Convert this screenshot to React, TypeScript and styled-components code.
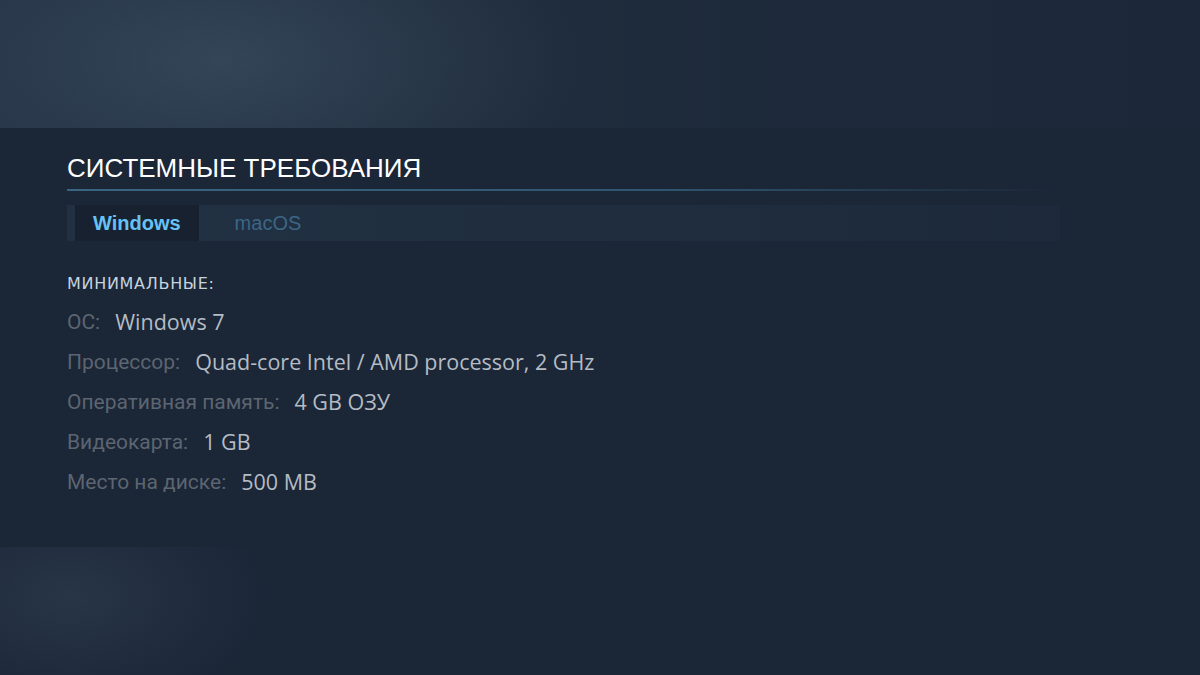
import React from "react";
import styled, { createGlobalStyle } from "styled-components";

const Global = createGlobalStyle`
  html, body { margin: 0; padding: 0; background: #1b2637; }
  body { width: 1200px; height: 675px; overflow: hidden; }
`;

const Page = styled.div`
  width: 1200px;
  height: 675px;
  display: flex;
  flex-direction: column;
  background: #1b2637;
`;

const TopBand = styled.div`
  height: 128px;
  flex: none;
  background:
    radial-gradient(ellipse 360px 170px at 220px 60px, rgba(70, 92, 112, 0.48), rgba(70, 92, 112, 0) 100%),
    linear-gradient(90deg, #243244 0%, #1e2b3b 55%, #1c2839 100%);
`;

const Section = styled.section`
  flex: none;
  width: 993px;
  padding: 24px 0 0 67px;
  display: flex;
  flex-direction: column;
`;

const Heading = styled.h2`
  margin: 0;
  font-family: "Liberation Sans", Arial, sans-serif;
  font-weight: 400;
  font-size: 26px;
  line-height: 32px;
  color: #ffffff;
`;

const Rule = styled.div`
  height: 2px;
  margin-top: 5px;
  background: linear-gradient(90deg, #3a6580 0%, #2f5670 60%, rgba(47, 86, 112, 0) 100%);
`;

const TabBar = styled.div`
  margin-top: 14px;
  height: 36px;
  display: flex;
  padding-left: 8px;
  background: linear-gradient(90deg, #213143 0%, #1f2d3e 60%, rgba(31, 45, 62, 0.5) 100%);
`;

const Tab = styled.div<{ $active?: boolean }>`
  display: flex;
  align-items: center;
  padding: 0 18px;
  font-family: "Liberation Sans", Arial, sans-serif;
  font-size: 20px;
  font-weight: ${(p) => (p.$active ? 700 : 400)};
  color: ${(p) => (p.$active ? "#67c1f5" : "#3c6685")};
  background: ${(p) => (p.$active ? "#172130" : "transparent")};
  margin-right: ${(p) => (p.$active ? "18px" : "0")};
`;

const Reqs = styled.div`
  margin-top: 33px;
  display: flex;
  flex-direction: column;
`;

const ReqTitle = styled.div`
  font-family: "DejaVu Sans", Verdana, sans-serif;
  font-size: 16px;
  line-height: 20px;
  letter-spacing: 0.7px;
  color: #c6d4df;
  text-transform: uppercase;
  margin-bottom: 8px;
`;

const Row = styled.div`
  display: flex;
  align-items: center;
  gap: 15px;
  height: 40px;
  line-height: 24px;
`;

const Label = styled.span`
  font-family: Roboto, "Noto Sans", sans-serif;
  font-size: 21px;
  color: #5c6570;
`;

const Value = styled.span`
  font-family: "Open Sans", "Noto Sans", sans-serif;
  font-size: 21.5px;
  color: #b4bcc4;
`;

const BottomBand = styled.div`
  flex: 1;
  margin-top: 45px;
  background: radial-gradient(ellipse 200px 120px at 70px 50px, rgba(58, 76, 96, 0.4), rgba(58, 76, 96, 0) 100%);
`;

const rows: [string, string][] = [
  ["ОС:", "Windows 7"],
  ["Процессор:", "Quad-core Intel / AMD processor, 2 GHz"],
  ["Оперативная память:", "4 GB ОЗУ"],
  ["Видеокарта:", "1 GB"],
  ["Место на диске:", "500 MB"],
];

export default function App() {
  return (
    <>
      <Global />
      <Page>
        <TopBand />
        <Section>
          <Heading>СИСТЕМНЫЕ ТРЕБОВАНИЯ</Heading>
          <Rule />
          <TabBar>
            <Tab $active>Windows</Tab>
            <Tab>macOS</Tab>
          </TabBar>
          <Reqs>
            <ReqTitle>МИНИМАЛЬНЫЕ:</ReqTitle>
            {rows.map(([l, v]) => (
              <Row key={l}>
                <Label>{l}</Label>
                <Value>{v}</Value>
              </Row>
            ))}
          </Reqs>
        </Section>
        <BottomBand />
      </Page>
    </>
  );
}
